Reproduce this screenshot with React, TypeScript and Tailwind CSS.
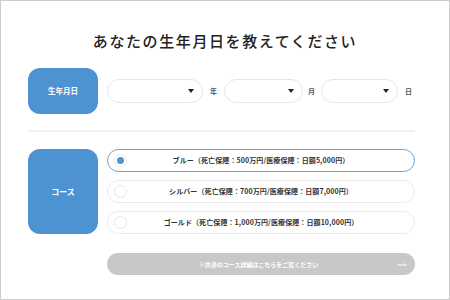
import React from "react";

const font = { fontFamily: '"Noto Sans CJK JP", "Noto Sans", sans-serif' };

const courses = [
	{ label: "ブルー（死亡保障：500万円/医療保障：日額5,000円）", selected: true },
	{ label: "シルバー（死亡保障：700万円/医療保障：日額7,000円）", selected: false },
	{ label: "ゴールド（死亡保障：1,000万円/医療保障：日額10,000円）", selected: false },
];

function SelectBox({ width }: { width: string }) {
	return (
		<div
			className={`${width} h-[24px] rounded-full border-[1.5px] border-[#e6e6e6] bg-white flex items-center justify-end pr-[8px]`}
		>
			<svg width="6" height="4" viewBox="0 0 6 4">
				<path d="M0 0 L6 0 L3 4 Z" fill="#222" />
			</svg>
		</div>
	);
}

export default function App() {
	return (
		<div
			className="w-[450px] h-[300px] border border-[#cccccc] bg-white flex flex-col pl-[27px] pr-[34px] pt-[31px]"
			style={font}
		>
			<h1 className="text-[15px] leading-[17px] font-medium text-[#222] tracking-[1.6px] text-center pl-[7px]">
				あなたの生年月日を教えてください
			</h1>

			<div className="flex items-center gap-[9px] mt-[19px]">
				<div className="w-[70px] h-[46px] rounded-[12px] bg-[#4e93d1] flex items-center justify-center text-white text-[7.5px] font-bold">
					生年月日
				</div>
				<div className="flex items-center text-[7px] leading-[8px] font-bold text-[#555]">
					<SelectBox width="w-[96px]" />
					<span className="ml-[7px] mr-[7px]">年</span>
					<SelectBox width="w-[79px]" />
					<span className="ml-[5px] mr-[6px]">月</span>
					<SelectBox width="w-[77px]" />
					<span className="ml-[7px]">日</span>
				</div>
			</div>

			<div className="h-[2px] bg-[#efefef] mt-[16px]" />

			<div className="flex gap-[9px] mt-[17px]">
				<div className="w-[70px] h-[85px] rounded-[12px] bg-[#4e93d1] flex items-center justify-center text-white text-[8px] font-bold">
					コース
				</div>
				<div className="flex-1 flex flex-col gap-[8px]">
					{courses.map((c) => (
						<div
							key={c.label}
							className={`h-[23px] rounded-full bg-white flex items-center px-[6px] border-[1.5px] ${
								c.selected ? "border-[#6ca3da]" : "border-[#ececec]"
							}`}
						>
							<div className="w-[13px] h-[13px] rounded-full border-[1.5px] border-[#e6e6e6] flex items-center justify-center shrink-0">
								{c.selected && <div className="w-[7px] h-[7px] rounded-full bg-[#4e93d1]" />}
							</div>
							<span className="flex-1 text-center text-[7px] font-bold text-[#333] pr-[13px] tracking-[0.1px]">
								{c.label}
							</span>
						</div>
					))}
				</div>
			</div>

			<div className="flex mt-[19px] pl-[79px]">
				<div className="flex-1 h-[22px] rounded-full bg-[#c8c8c8] flex items-center pl-[13px] pr-[8px]">
					<span className="flex-1 text-center text-[6px] font-bold text-white">
						※共済のコース詳細はこちらをご覧ください
					</span>
					<svg width="10" height="3" viewBox="0 0 10 3">
						<path d="M0 2 H9.5 L7.5 0.5" fill="none" stroke="#fff" strokeWidth="1" />
					</svg>
				</div>
			</div>
		</div>
	);
}
